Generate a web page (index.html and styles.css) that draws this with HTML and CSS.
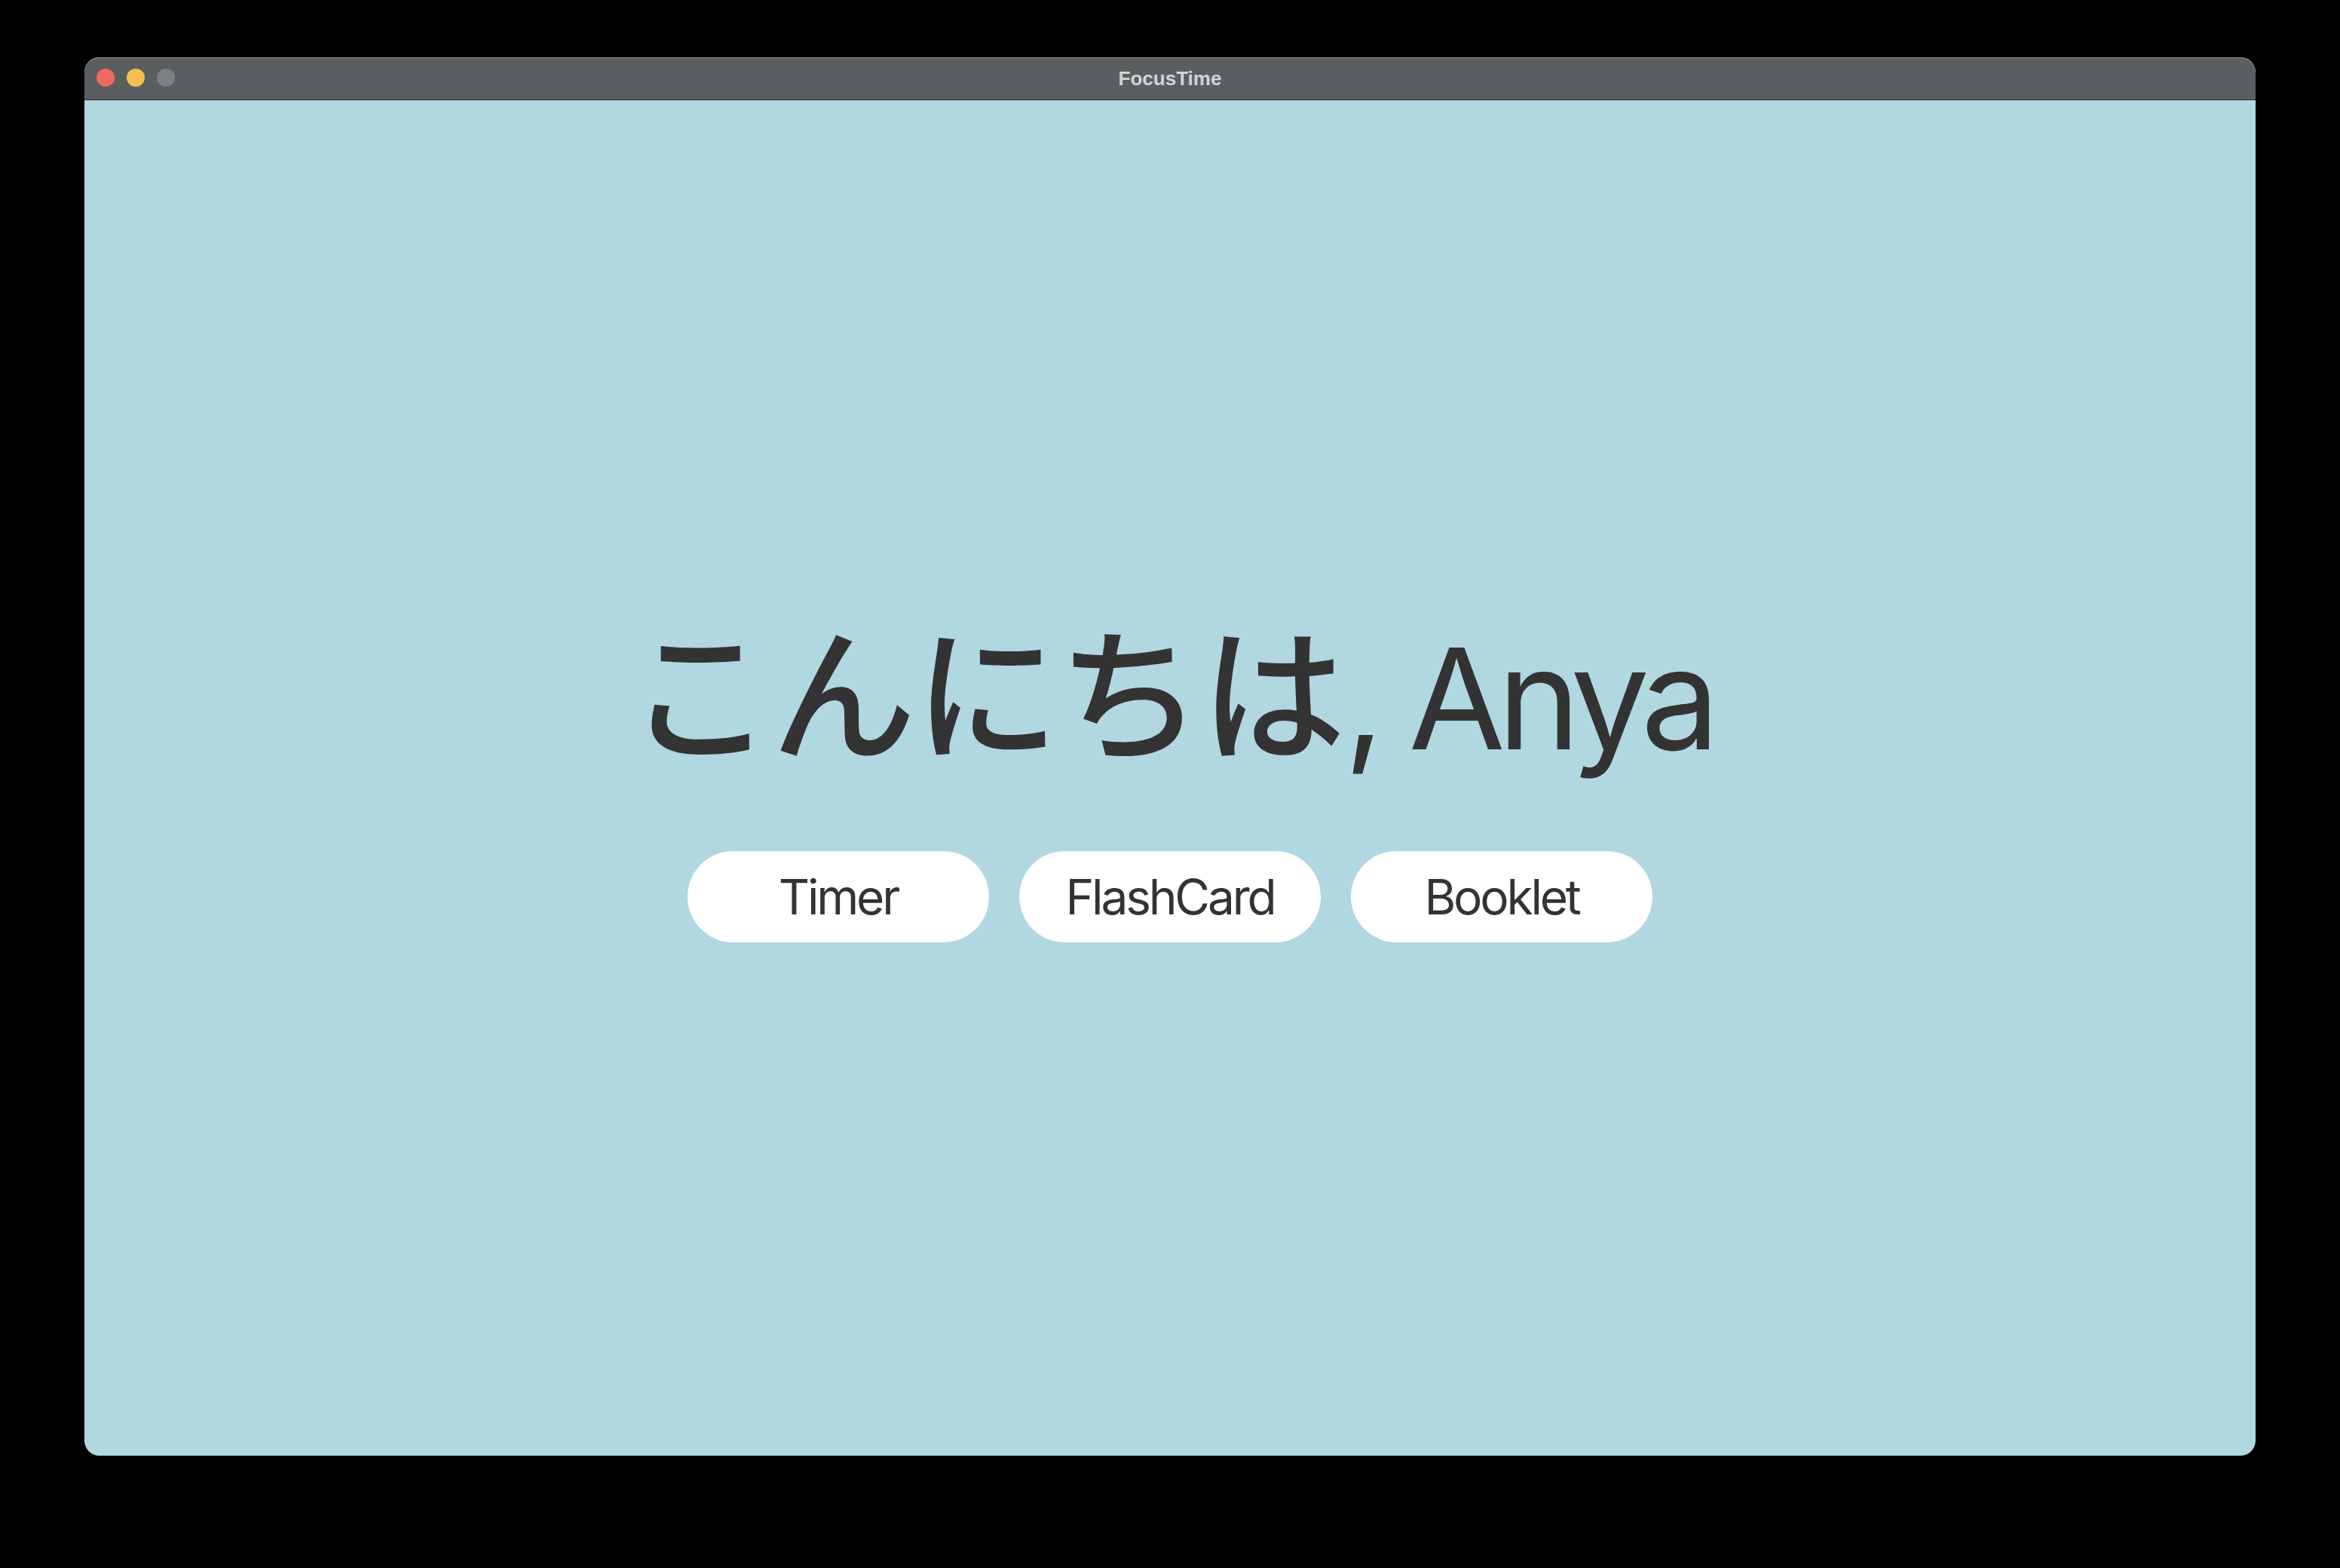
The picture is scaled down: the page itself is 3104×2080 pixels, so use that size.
FILE: index.html
```html
<!DOCTYPE html>
<html lang="ja">
<head>
<meta charset="utf-8">
<title>FocusTime</title>
<link rel="stylesheet" href="styles.css">
</head>
<body>
<div class="window">
  <div class="titlebar">
    <div class="lights">
      <span class="light red"></span>
      <span class="light yellow"></span>
      <span class="light gray"></span>
    </div>
    <div class="title">FocusTime</div>
  </div>
  <main class="content">
    <h1 class="greeting"><span class="jp">こんにちは</span><span class="latin">, Anya</span></h1>
    <div class="actions">
      <button class="pill">Timer</button>
      <button class="pill">FlashCard</button>
      <button class="pill">Booklet</button>
    </div>
  </main>
</div>
</body>
</html>
```
FILE: styles.css
```css
html, body {
  margin: 0;
  padding: 0;
  background: #000;
  width: 3104px;
  height: 2080px;
  overflow: hidden;
}

.window {
  margin: 76px 0 0 112px;
  width: 2880px;
  height: 1855px;
  border-radius: 20px;
  overflow: hidden;
  display: flex;
  flex-direction: column;
  background: #b1d7e0;
}

.titlebar {
  position: relative;
  flex: none;
  background: #5b5e60;
  border-top: 1px solid #8d8f91;
  border-bottom: 1px solid #2b2c2d;
  border-radius: 20px 20px 0 0;
  display: flex;
  align-items: center;
  justify-content: center;
  box-sizing: border-box;
  height: 57px;
}

.lights {
  position: absolute;
  left: 16px;
  top: 14px;
  display: flex;
  gap: 16px;
}

.light {
  width: 24px;
  height: 24px;
  border-radius: 50%;
  display: block;
}
.red { background: #ee6a5e; }
.yellow { background: #f4bf4f; }
.gray { background: #7c8083; }

.title {
  font-family: "Liberation Sans", Arial, sans-serif;
  font-weight: bold;
  font-size: 26px;
  color: #d3d4d5;
  line-height: 1;
  margin-top: -2px;
}

.content {
  flex: 1;
  display: flex;
  flex-direction: column;
  align-items: center;
  justify-content: center;
  gap: 83px;
  padding-bottom: 20px;
}

.greeting {
  margin: 0;
  font-weight: 400;
  font-size: 192px;
  line-height: 232px;
  color: #333333;
  white-space: nowrap;
}

.jp {
  font-family: "Noto Sans CJK JP", sans-serif;
  font-weight: 500;
  letter-spacing: -2px;
}

.latin {
  font-family: Inter, "Liberation Sans", sans-serif;
  font-size: 186px;
  letter-spacing: -0.055em;
}

.actions {
  display: flex;
  gap: 40px;
}

.pill {
  width: 400px;
  height: 121px;
  border: none;
  border-radius: 61px;
  background: #ffffff;
  color: #333333;
  font-family: Inter, "Liberation Sans", sans-serif;
  font-size: 64px;
  letter-spacing: -0.05em;
  padding: 0;
  margin: 0;
}
```
